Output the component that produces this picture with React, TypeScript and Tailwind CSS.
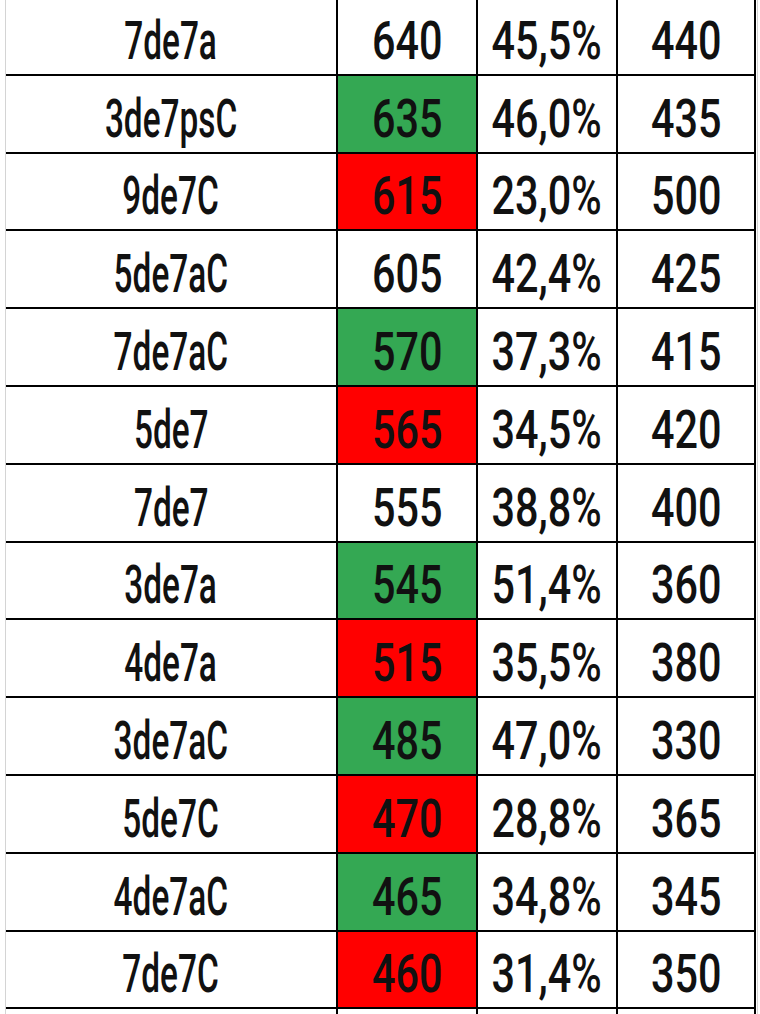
type Row = {
  name: string;
  score: string;
  tone: "none" | "green" | "red";
  pct: string;
  last: string;
};

const rows: Row[] = [
  { name: "7de7a", score: "640", tone: "none", pct: "45,5%", last: "440" },
  { name: "3de7psC", score: "635", tone: "green", pct: "46,0%", last: "435" },
  { name: "9de7C", score: "615", tone: "red", pct: "23,0%", last: "500" },
  { name: "5de7aC", score: "605", tone: "none", pct: "42,4%", last: "425" },
  { name: "7de7aC", score: "570", tone: "green", pct: "37,3%", last: "415" },
  { name: "5de7", score: "565", tone: "red", pct: "34,5%", last: "420" },
  { name: "7de7", score: "555", tone: "none", pct: "38,8%", last: "400" },
  { name: "3de7a", score: "545", tone: "green", pct: "51,4%", last: "360" },
  { name: "4de7a", score: "515", tone: "red", pct: "35,5%", last: "380" },
  { name: "3de7aC", score: "485", tone: "green", pct: "47,0%", last: "330" },
  { name: "5de7C", score: "470", tone: "red", pct: "28,8%", last: "365" },
  { name: "4de7aC", score: "465", tone: "green", pct: "34,8%", last: "345" },
  { name: "7de7C", score: "460", tone: "red", pct: "31,4%", last: "350" },
  { name: "", score: "", tone: "none", pct: "", last: "" },
];

const toneBg = {
  none: "bg-white",
  green: "bg-[#34a853]",
  red: "bg-[#ff0000]",
};

const Cell = ({
  text,
  className,
  narrow,
}: {
  text: string;
  className: string;
  narrow?: boolean;
}) => (
  <div
    className={`flex h-full items-end justify-center overflow-hidden border-r-2 border-black pb-[6px] ${className}`}
  >
    <span
      className={`inline-block whitespace-nowrap text-[53px] leading-none font-medium text-[#111] ${
        narrow ? "scale-x-[0.63]" : "scale-x-[0.78]"
      }`}
    >
      {text}
    </span>
  </div>
);

const App = () => {
  return (
    <div
      className="flex h-[1014px] w-[760px] overflow-hidden bg-white"
      style={{ fontFamily: "Roboto, 'Liberation Sans', sans-serif" }}
    >
      <div className="w-[5px] shrink-0" />
      <div className="w-px shrink-0 bg-[#d4d4d4]" />
      <div className="-mt-[2px] flex w-[750px] shrink-0 flex-col">
        {rows.map((r, i) => (
          <div key={i} className="flex h-[77.8px] shrink-0 border-b-2 border-black">
            <Cell text={r.name} className="w-[332px] bg-white" narrow />
            <Cell text={r.score} className={`w-[140px] ${toneBg[r.tone]}`} />
            <Cell text={r.pct} className="w-[140px] bg-white" />
            <Cell text={r.last} className="w-[138px] bg-white" />
          </div>
        ))}
      </div>
      <div className="w-px shrink-0" />
      <div className="w-px shrink-0 bg-[#d4d4d4]" />
    </div>
  );
};

export default App;
